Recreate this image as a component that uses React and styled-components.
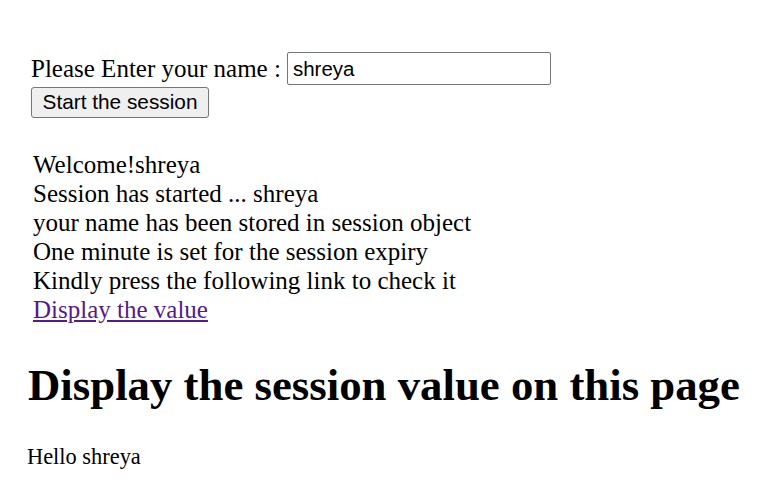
import React, { useState } from "react"
import styled, { createGlobalStyle } from "styled-components"

const GlobalStyle = createGlobalStyle`
  body {
    margin: 0;
    background: #ffffff;
    color: #000000;
    font-family: "Liberation Serif", "Times New Roman", serif;
  }
`

const Page = styled.div`
  display: flex;
  flex-direction: column;
  padding: 52px 0 0 0;
`

const SessionForm = styled.form`
  display: flex;
  flex-direction: column;
  align-items: flex-start;
  gap: 2px;
  padding-left: 31px;
`

const NameRow = styled.div`
  display: flex;
  align-items: center;
  gap: 6px;
`

const Label = styled.label`
  font-size: 25px;
  line-height: 33px;
`

const NameInput = styled.input`
  box-sizing: border-box;
  width: 264px;
  height: 33px;
  padding: 0 5px;
  border: 1px solid #767676;
  border-radius: 2px;
  font-family: "Liberation Sans", Arial, sans-serif;
  font-size: 20.5px;
  color: #000;
  outline: none;
`

const StartButton = styled.button`
  box-sizing: border-box;
  width: 178px;
  height: 31px;
  padding: 0 0 1px 0;
  background: #efefef;
  border: 1px solid #767676;
  border-radius: 3px;
  font-family: "Liberation Sans", Arial, sans-serif;
  font-size: 20.8px;
  color: #000;
`

const Messages = styled.div`
  display: flex;
  flex-direction: column;
  padding: 32px 0 0 33px;
`

const Line = styled.div`
  font-size: 25px;
  line-height: 29px;
  white-space: nowrap;
`

const ValueLink = styled.a`
  font-size: 25px;
  line-height: 29px;
  color: #551a8b;
  text-decoration: underline;
  align-self: flex-start;
`

const SessionPage = styled.section`
  display: flex;
  flex-direction: column;
  padding-left: 28px;
`

const Heading = styled.h1`
  margin: 35px 0 0 0;
  font-size: 44.8px;
  line-height: 52px;
  font-weight: bold;
  white-space: nowrap;
`

const Greeting = styled.p`
  margin: 33px 0 0 -1px;
  font-size: 22.4px;
  line-height: 26px;
`

export default function App() {
  const [name, setName] = useState("shreya")

  const lines = [
    `Welcome!${name}`,
    `Session has started ... ${name}`,
    "your name has been stored in session object",
    "One minute is set for the session expiry",
    "Kindly press the following link to check it",
  ]

  return (
    <>
      <GlobalStyle />
      <Page>
        <SessionForm onSubmit={(e) => e.preventDefault()}>
          <NameRow>
            <Label htmlFor="uname">Please Enter your name :</Label>
            <NameInput
              id="uname"
              value={name}
              onChange={(e) => setName(e.target.value)}
            />
          </NameRow>
          <StartButton type="submit">Start the session</StartButton>
        </SessionForm>
        <Messages>
          {lines.map((text, i) => (
            <Line key={i}>{text}</Line>
          ))}
          <ValueLink href="#display">Display the value</ValueLink>
        </Messages>
        <SessionPage id="display">
          <Heading>Display the session value on this page</Heading>
          <Greeting>Hello {name}</Greeting>
        </SessionPage>
      </Page>
    </>
  )
}
